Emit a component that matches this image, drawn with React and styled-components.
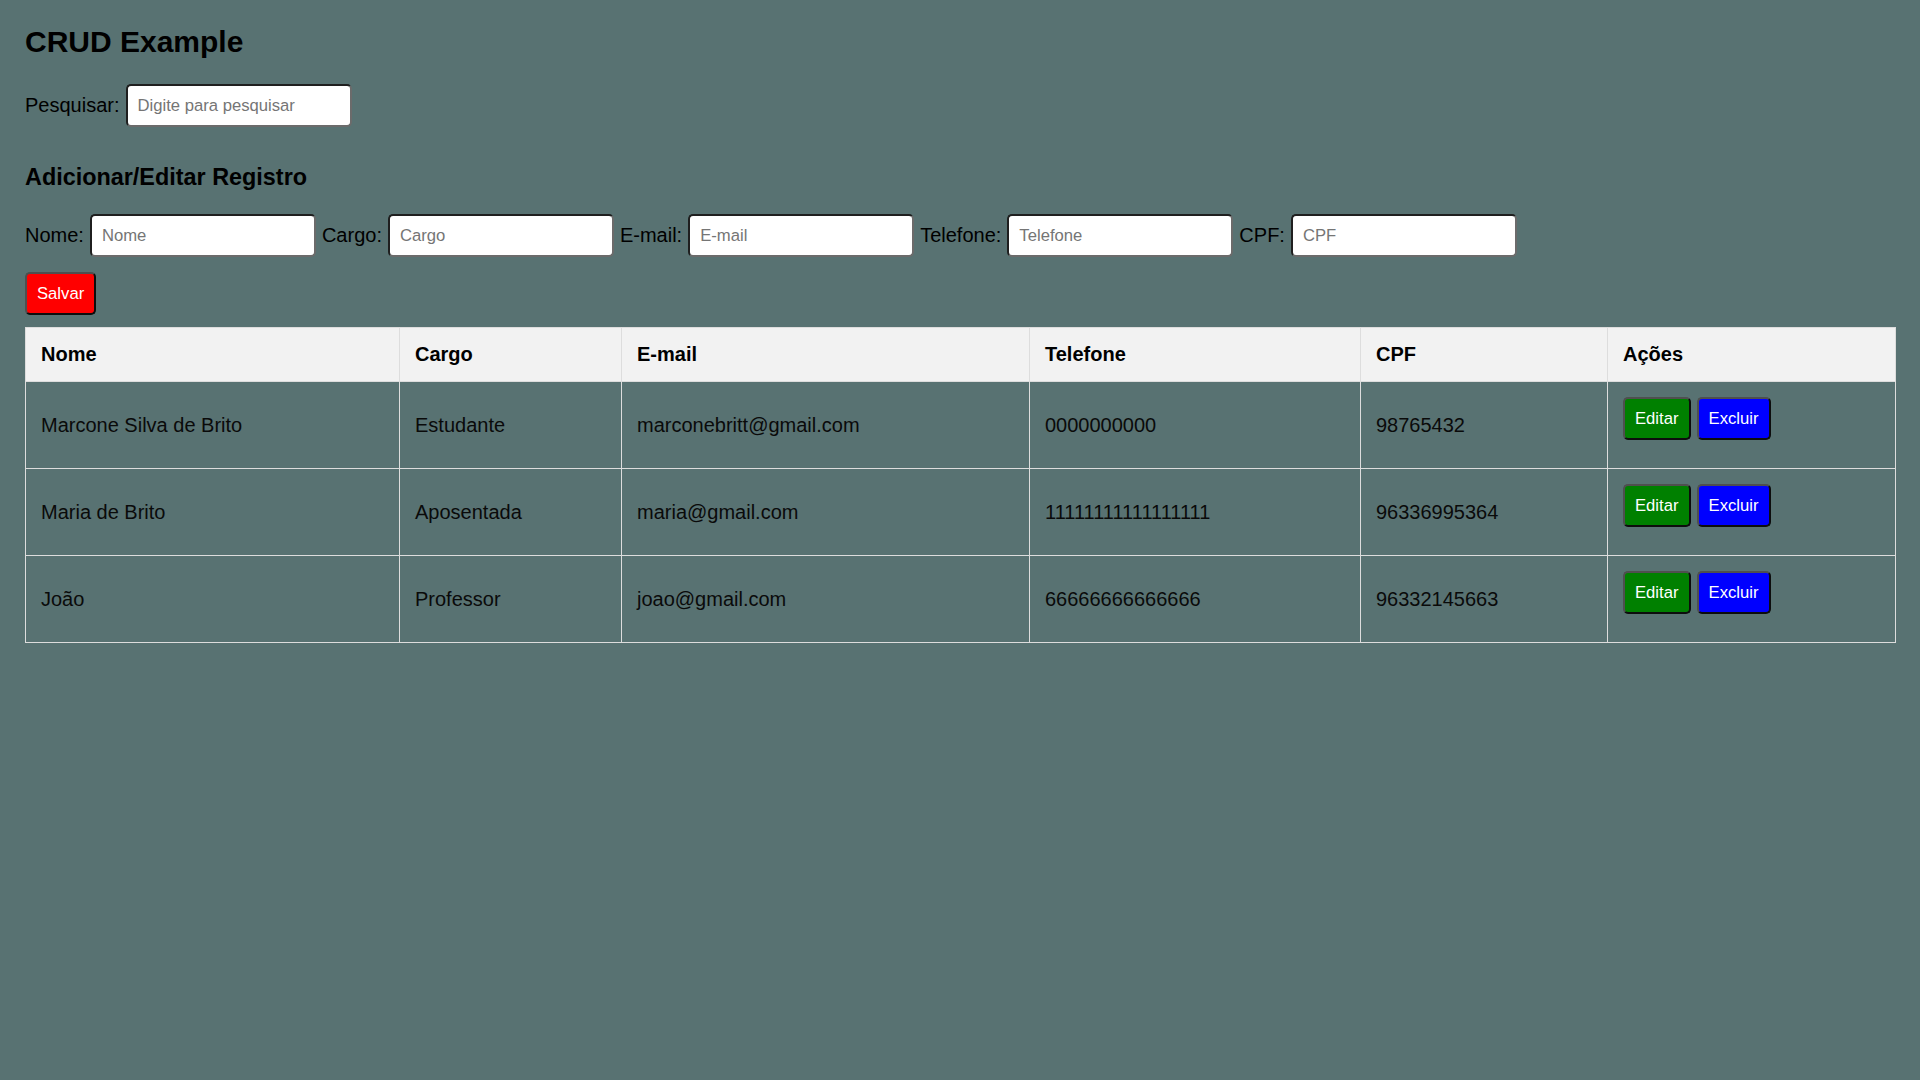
import React from "react";
import styled, { createGlobalStyle } from "styled-components";

const GlobalStyle = createGlobalStyle`
  html, body {
    margin: 0;
    padding: 0;
    background: #587272;
  }
  body {
    font-family: "Liberation Sans", Arial, sans-serif;
    color: #000;
  }
`;

const Page = styled.div`
  padding: 25px 25px 25px;
`;

const Title = styled.h1`
  margin: 0 0 25px;
  font-size: 30px;
  font-weight: 700;
`;

const FieldRow = styled.div`
  display: flex;
  align-items: center;
  flex-wrap: wrap;
  gap: 6px;
`;

const Label = styled.label`
  font-size: 20px;
`;

const TextInput = styled.input`
  box-sizing: border-box;
  width: 226px;
  height: 43px;
  padding: 0 10px;
  font-family: "Liberation Sans", Arial, sans-serif;
  font-size: 16.67px;
  color: #000;
  background: #fff;
  border: 2px solid;
  border-color: #1f1f1f #6b6b6b #6b6b6b #1f1f1f;
  border-radius: 5px;
  outline: none;

  &::placeholder {
    color: #757575;
  }
`;

const SectionTitle = styled.h3`
  margin: 37px 0 23px;
  font-size: 23.4px;
  font-weight: 700;
`;

const Button = styled.button`
  box-sizing: border-box;
  height: 43px;
  padding: 0 10px;
  font-family: "Liberation Sans", Arial, sans-serif;
  font-size: 16.67px;
  color: #fff;
  background: ${(p) => p.$bg};
  border: 2px solid;
  border-color: #4f4f4f #0d0d0d #0d0d0d #4f4f4f;
  border-radius: 5px;
  cursor: pointer;
`;

const SaveBar = styled.div`
  margin-top: 15px;
`;

const Table = styled.table`
  margin-top: 12px;
  width: 100%;
  border-collapse: collapse;
  table-layout: fixed;
`;

const HeadCell = styled.th`
  background: #f2f2f2;
  padding: 15px;
  text-align: left;
  font-size: 20px;
  font-weight: 700;
  border: 1px solid #dddddd;
`;

const Cell = styled.td`
  padding: 15px;
  font-size: 20px;
  color: #0a0a0a;
  border: 1px solid #dddddd;
  vertical-align: middle;
`;

const Actions = styled.div`
  display: flex;
  gap: 6px;
  padding-bottom: 13px;
`;

const columns = [
  { label: "Nome", width: 374 },
  { label: "Cargo", width: 222 },
  { label: "E-mail", width: 408 },
  { label: "Telefone", width: 331 },
  { label: "CPF", width: 247 },
  { label: "Ações", width: 288 },
];

const rows = [
  {
    nome: "Marcone Silva de Brito",
    cargo: "Estudante",
    email: "marconebritt@gmail.com",
    telefone: "0000000000",
    cpf: "98765432",
  },
  {
    nome: "Maria de Brito",
    cargo: "Aposentada",
    email: "maria@gmail.com",
    telefone: "11111111111111111",
    cpf: "96336995364",
  },
  {
    nome: "João",
    cargo: "Professor",
    email: "joao@gmail.com",
    telefone: "66666666666666",
    cpf: "96332145663",
  },
];

const fields = [
  { label: "Nome:", placeholder: "Nome" },
  { label: "Cargo:", placeholder: "Cargo" },
  { label: "E-mail:", placeholder: "E-mail" },
  { label: "Telefone:", placeholder: "Telefone" },
  { label: "CPF:", placeholder: "CPF" },
];

export default function App() {
  return (
    <>
      <GlobalStyle />
      <Page>
        <Title>CRUD Example</Title>
        <FieldRow>
          <Label>Pesquisar:</Label>
          <TextInput placeholder="Digite para pesquisar" />
        </FieldRow>

        <SectionTitle>Adicionar/Editar Registro</SectionTitle>
        <FieldRow>
          {fields.map((f) => (
            <React.Fragment key={f.label}>
              <Label>{f.label}</Label>
              <TextInput placeholder={f.placeholder} />
            </React.Fragment>
          ))}
        </FieldRow>
        <SaveBar>
          <Button $bg="#ff0000">Salvar</Button>
        </SaveBar>

        <Table>
          <colgroup>
            {columns.map((c) => (
              <col key={c.label} style={{ width: c.width }} />
            ))}
          </colgroup>
          <thead>
            <tr>
              {columns.map((c) => (
                <HeadCell key={c.label}>{c.label}</HeadCell>
              ))}
            </tr>
          </thead>
          <tbody>
            {rows.map((r) => (
              <tr key={r.cpf}>
                <Cell>{r.nome}</Cell>
                <Cell>{r.cargo}</Cell>
                <Cell>{r.email}</Cell>
                <Cell>{r.telefone}</Cell>
                <Cell>{r.cpf}</Cell>
                <Cell>
                  <Actions>
                    <Button $bg="#008000">Editar</Button>
                    <Button $bg="#0000ff">Excluir</Button>
                  </Actions>
                </Cell>
              </tr>
            ))}
          </tbody>
        </Table>
      </Page>
    </>
  );
}
